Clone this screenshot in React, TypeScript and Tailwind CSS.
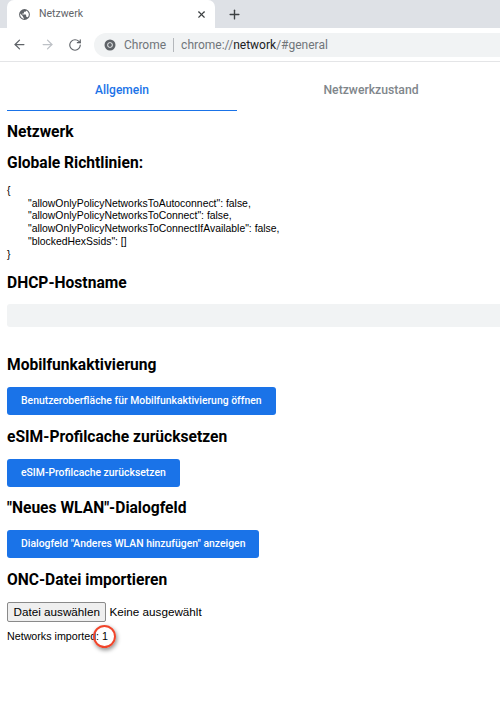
import { ArrowLeft, ArrowRight, Plus, RotateCw, X } from "lucide-react";

const buttonClass =
  "h-[28px] rounded-[3px] bg-[#1a73e8] px-[14px] text-[10.4px] font-medium text-white [font-family:Roboto,sans-serif]";
const headingClass =
  "text-[15.6px] leading-[20px] font-bold text-black [font-family:Roboto,sans-serif]";

function GlobeIcon() {
  return (
    <svg viewBox="0 0 24 24" className="h-[13px] w-[13px]" fill="#5f6368">
      <path d="M12 2a10 10 0 1 0 0 20 10 10 0 0 0 0-20zm-1 17.9A8 8 0 0 1 4.2 10.2L9 15v1a2 2 0 0 0 2 2v1.9zm6.9-2.5A2 2 0 0 0 16 16h-1v-3a1 1 0 0 0-1-1H8v-2h2a1 1 0 0 0 1-1V7h2a2 2 0 0 0 2-2v-.4a8 8 0 0 1 2.9 12.8z" />
    </svg>
  );
}

function ChromeIcon() {
  return (
    <svg viewBox="0 0 24 24" className="h-[12px] w-[12px]">
      <circle cx="12" cy="12" r="11" fill="#5f6368" />
      <circle cx="12" cy="12" r="5.5" fill="#f1f3f4" />
      <circle cx="12" cy="12" r="3.8" fill="#5f6368" />
    </svg>
  );
}

export default function App() {
  return (
    <div className="relative h-[708px] w-[500px] overflow-hidden bg-white [font-family:'Liberation_Sans',Arial,sans-serif]">
      <div className="flex h-[28px] bg-[#dee1e6] pl-[7px]">
        <div className="flex h-[28px] w-[208px] items-center rounded-t-[7px] bg-white pr-[8px] pl-[11px]">
          <GlobeIcon />
          <span className="ml-[8px] flex-1 text-[10.5px] text-[#5f6368] [font-family:Roboto,sans-serif]">
            Netzwerk
          </span>
          <X size={11} strokeWidth={2.5} className="text-[#3c4043]" />
        </div>
        <div className="flex items-center pl-[12px]">
          <Plus size={15} strokeWidth={2.2} className="text-[#3c4043]" />
        </div>
      </div>

      <div className="flex h-[34px] items-center border-b border-[#e4e5e7] pl-[12px]">
        <ArrowLeft size={15} className="text-[#5f6368]" />
        <ArrowRight size={15} className="ml-[13px] text-[#bdc1c6]" />
        <RotateCw size={14} className="ml-[13px] text-[#5f6368]" />
        <div className="ml-[12px] flex h-[24px] flex-1 items-center rounded-l-full bg-[#f1f3f4] pl-[10px] text-[12px] text-[#70757a] [font-family:Roboto,sans-serif]">
          <ChromeIcon />
          <span className="ml-[8px]">Chrome</span>
          <span className="mx-[7px] h-[14px] w-px bg-[#b4b7bb]" />
          <span>
            chrome://<span className="text-[#202124]">network</span>/#general
          </span>
        </div>
      </div>

      <div className="flex h-[49px] px-[7px] [font-family:Roboto,sans-serif]">
        <div className="flex w-[230px] items-center justify-center border-b-[1px] border-[#1a73e8] pt-[7px] text-[12px] font-medium text-[#1a73e8]">
          Allgemein
        </div>
        <div className="flex flex-1 items-center justify-center pt-[7px] pl-[12px] text-[12.2px] font-medium text-[#80868b]">
          Netzwerkzustand
        </div>
      </div>

      <div className="pl-[7px]">
        <h1 className={`mt-[11px] ${headingClass}`}>Netzwerk</h1>
        <h2 className={`mt-[11px] ${headingClass}`}>Globale Richtlinien:</h2>
        <pre className="mt-[12px] text-[10.4px] leading-[12.7px] text-black [font-family:'Liberation_Sans',sans-serif]">
          {"{\n"}
          <span className="pl-[21px]">{'"allowOnlyPolicyNetworksToAutoconnect": false,'}</span>
          {"\n"}
          <span className="pl-[21px]">{'"allowOnlyPolicyNetworksToConnect": false,'}</span>
          {"\n"}
          <span className="pl-[21px]">{'"allowOnlyPolicyNetworksToConnectIfAvailable": false,'}</span>
          {"\n"}
          <span className="pl-[21px]">{'"blockedHexSsids": []'}</span>
          {"\n}"}
        </pre>
        <h2 className={`mt-[12px] ${headingClass}`}>DHCP-Hostname</h2>
        <div className="mt-[11px] h-[23px] rounded-l-[3px] bg-[#f1f3f4]" />
        <h2 className={`mt-[28px] ${headingClass}`}>Mobilfunkaktivierung</h2>
        <button type="button" className={`mt-[12px] block ${buttonClass}`}>
          Benutzeroberfläche für Mobilfunkaktivierung öffnen
        </button>
        <h2 className={`mt-[12px] ${headingClass}`}>eSIM-Profilcache zurücksetzen</h2>
        <button type="button" className={`mt-[12px] block ${buttonClass}`}>
          eSIM-Profilcache zurücksetzen
        </button>
        <h2 className={`mt-[11px] ${headingClass}`}>"Neues WLAN"-Dialogfeld</h2>
        <button type="button" className={`mt-[12px] block ${buttonClass}`}>
          Dialogfeld "Anderes WLAN hinzufügen" anzeigen
        </button>
        <h2 className={`mt-[12px] ${headingClass}`}>ONC-Datei importieren</h2>
        <div className="mt-[12px] flex items-center text-[11.7px] text-black">
          <button
            type="button"
            className="h-[20px] rounded-[2px] border border-[#8a8a8a] bg-[#efefef] px-[5.5px] text-[11.7px]"
          >
            Datei auswählen
          </button>
          <span className="ml-[3px]">Keine ausgewählt</span>
        </div>
        <p className="mt-[7px] text-[10.7px] leading-[14px] text-black">Networks imported: 1</p>
      </div>

      <div className="absolute top-[625px] left-[93px] h-[23px] w-[23px] rounded-full border-2 border-[#f0452b] shadow-[1px_2px_4px_rgba(0,0,0,0.45)]" />
    </div>
  );
}
